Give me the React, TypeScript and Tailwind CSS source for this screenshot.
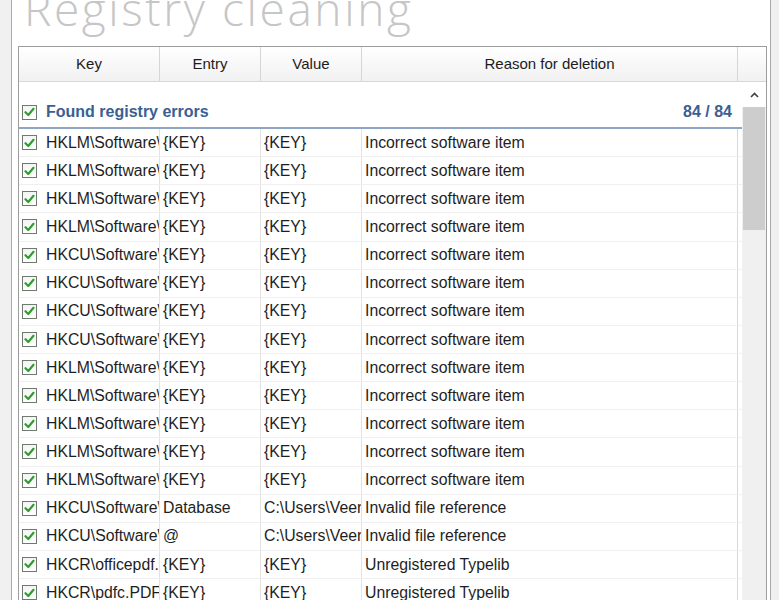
import React from 'react'

type Row = { key: string; entry: string; value: string; reason: string }

const rows: Row[] = [
    ...Array(4).fill({ key: 'HKLM\\Software\\Wow6432Node', entry: '{KEY}', value: '{KEY}', reason: 'Incorrect software item' }),
    ...Array(4).fill({ key: 'HKCU\\Software\\VB and VBA', entry: '{KEY}', value: '{KEY}', reason: 'Incorrect software item' }),
    ...Array(5).fill({ key: 'HKLM\\Software\\Wow6432Node', entry: '{KEY}', value: '{KEY}', reason: 'Incorrect software item' }),
    { key: 'HKCU\\Software\\VB and VBA', entry: 'Database', value: 'C:\\Users\\Veera\\AppData', reason: 'Invalid file reference' },
    { key: 'HKCU\\Software\\VB and VBA', entry: '@', value: 'C:\\Users\\Veera\\AppData', reason: 'Invalid file reference' },
    { key: 'HKCR\\officepdf.PDF', entry: '{KEY}', value: '{KEY}', reason: 'Unregistered Typelib' },
    { key: 'HKCR\\pdfc.PDFCreator', entry: '{KEY}', value: '{KEY}', reason: 'Unregistered Typelib' },
]

const Check = () => (
    <div className="w-[15px] h-[15px] shrink-0 border border-[#6f7a6f] bg-gradient-to-b from-[#f4f4f4] to-white flex items-center justify-center">
        <svg width="11" height="10" viewBox="0 0 11 10">
            <path d="M1.5 5.2 L4.3 8 L9.5 1.8" fill="none" stroke="#2f9e2f" strokeWidth="2.2" strokeLinecap="round" strokeLinejoin="round" />
        </svg>
    </div>
)

export default function App() {
    return (
        <div className="w-[779px] h-[600px] overflow-hidden bg-[#f0f0f0] flex" style={{ fontFamily: '"Liberation Sans", Arial, sans-serif' }}>
            <div className="ml-[11px] w-[760px] h-full bg-white border-x border-[#a9a9a9] flex flex-col overflow-hidden">
                <div className="h-[46px] shrink-0 pl-[12px] overflow-hidden">
                    <div className="-mt-[22px] text-[46px] leading-[60px] font-light tracking-[2.6px] text-[#c6c6c6] whitespace-nowrap" style={{ fontFamily: '"Open Sans", sans-serif' }}>
                        Registry cleaning
                    </div>
                </div>

                <div className="ml-[6px] w-[749px] flex-1 min-h-0 border border-[#9d9d9d] border-b-0 flex flex-col overflow-hidden">
                    {/* header */}
                    <div className="h-[35px] shrink-0 flex text-[15px] text-[#1c1c1c] bg-gradient-to-b from-white to-[#f1f1f1] border-b border-[#d8d8d8]">
                        <div className="w-[141px] flex items-center justify-center border-r border-[#d6d6d6]">Key</div>
                        <div className="w-[101px] flex items-center justify-center border-r border-[#d6d6d6]">Entry</div>
                        <div className="w-[101px] flex items-center justify-center border-r border-[#d6d6d6]">Value</div>
                        <div className="w-[376px] flex items-center justify-center border-r border-[#d6d6d6]">Reason for deletion</div>
                        <div className="flex-1" />
                    </div>

                    <div className="flex flex-1 min-h-0 overflow-hidden">
                        <div className="w-[723px] flex flex-col">
                            <div className="h-[15px] shrink-0" />
                            <div className="h-[32px] shrink-0 flex items-center pl-[3px] pr-[10px] text-[16px] font-bold text-[#3b5f93] border-b-2 border-[#8fa6c4]">
                                <Check />
                                <span className="ml-[9px]">Found registry errors</span>
                                <span className="ml-auto">84 / 84</span>
                            </div>
                            {rows.map((r, i) => (
                                <div key={i} className="h-[28.125px] shrink-0 flex text-[15.8px] text-[#1e1e1e] border-b border-[#efefef]">
                                    <div className="w-[141px] flex items-center pl-[3px] border-r border-[#e2e2e2] overflow-hidden whitespace-nowrap">
                                        <Check />
                                        <span className="ml-[9px]">{r.key}</span>
                                    </div>
                                    <div className="w-[101px] flex items-center pl-[3px] border-r border-[#e2e2e2] overflow-hidden whitespace-nowrap">{r.entry}</div>
                                    <div className="w-[101px] flex items-center pl-[3px] border-r border-[#e2e2e2] overflow-hidden whitespace-nowrap">{r.value}</div>
                                    <div className="w-[376px] flex items-center pl-[3px] border-r border-[#d8d8d8] overflow-hidden whitespace-nowrap">{r.reason}</div>
                                </div>
                            ))}
                        </div>

                        <div className="w-[24px] ml-auto flex flex-col bg-[#f0f0f0]">
                            <div className="h-[25px] shrink-0 bg-white flex items-center justify-center">
                                <svg width="9" height="6" viewBox="0 0 9 6">
                                    <path d="M1 5 L4.5 1.5 L8 5" fill="none" stroke="#404040" strokeWidth="1.6" />
                                </svg>
                            </div>
                            <div className="h-[123px] shrink-0 mx-[1px] bg-[#cdcdcd]" />
                        </div>
                    </div>
                </div>
            </div>
        </div>
    )
}
